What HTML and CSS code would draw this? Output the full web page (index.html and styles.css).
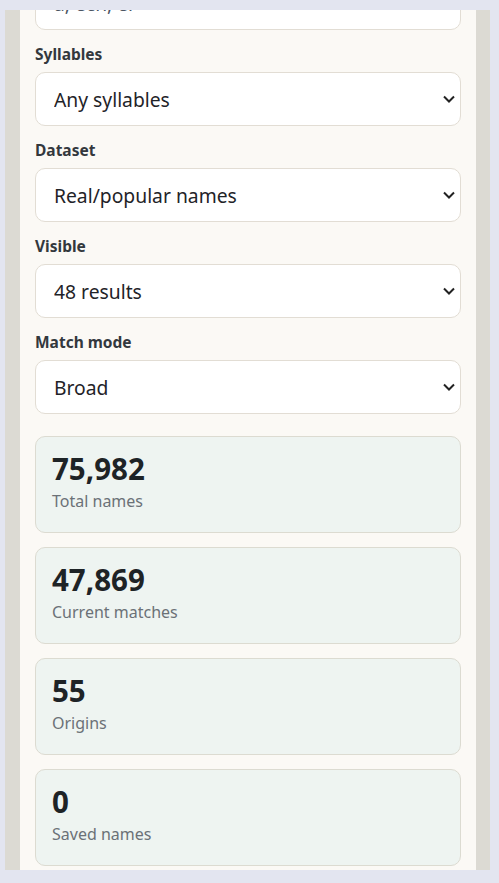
FILE: index.html
```html
<!DOCTYPE html>
<html lang="en">
<head>
    <meta charset="UTF-8">
    <meta name="viewport" content="width=device-width, initial-scale=1.0">
    <title>Name Finder - Filters</title>
    <link rel="stylesheet" href="styles.css">
</head>
<body>
    <div class="frame">
        <div class="panel">
            <div class="form-group first">
                <input type="text" class="field" value="a, ech, er">
            </div>
            <div class="form-group">
                <label for="syllables">Syllables</label>
                <select id="syllables" class="field">
                    <option>Any syllables</option>
                    <option>1 syllable</option>
                    <option>2 syllables</option>
                    <option>3+ syllables</option>
                </select>
            </div>
            <div class="form-group">
                <label for="dataset">Dataset</label>
                <select id="dataset" class="field">
                    <option>Real/popular names</option>
                    <option>Generated names</option>
                </select>
            </div>
            <div class="form-group">
                <label for="visible">Visible</label>
                <select id="visible" class="field">
                    <option>48 results</option>
                    <option>96 results</option>
                </select>
            </div>
            <div class="form-group">
                <label for="matchMode">Match mode</label>
                <select id="matchMode" class="field">
                    <option>Broad</option>
                    <option>Strict</option>
                </select>
            </div>

            <div class="stats">
                <div class="stat-card">
                    <div class="stat-value">75,982</div>
                    <div class="stat-label">Total names</div>
                </div>
                <div class="stat-card">
                    <div class="stat-value">47,869</div>
                    <div class="stat-label">Current matches</div>
                </div>
                <div class="stat-card">
                    <div class="stat-value">55</div>
                    <div class="stat-label">Origins</div>
                </div>
                <div class="stat-card">
                    <div class="stat-value">0</div>
                    <div class="stat-label">Saved names</div>
                </div>
            </div>
        </div>
    </div>
</body>
</html>
```

FILE: styles.css
```css
body {
    font-family: "Noto Sans", "Open Sans", sans-serif;
    background-color: #e3e5f0;
    margin: 0;
    padding: 10px 0 0 5px;
}
.frame {
    box-sizing: border-box;
    width: 485px;
    height: 860px;
    background: #fbf9f5;
    border-left: 15px solid #dcdad3;
    border-right: 14px solid #dcdad3;
    overflow: hidden;
}
.panel {
    padding: 0 15px;
}
.form-group {
    margin-bottom: 15px;
}
.form-group.first {
    margin-top: -34px;
}
label {
    display: block;
    font-size: 15.5px;
    font-weight: 700;
    line-height: 18px;
    color: #33383d;
    margin-bottom: 9px;
}
.field {
    display: block;
    box-sizing: border-box;
    width: 100%;
    height: 54px;
    padding: 0 30px 0 18px;
    border: 1px solid #e2ddd4;
    border-radius: 10px;
    background-color: #fff;
    font-family: inherit;
    font-size: 19.3px;
    color: #1f2328;
    outline: none;
}
input.field {
    color: #4b5563;
}
select.field {
    -webkit-appearance: none;
    appearance: none;
    background-image: url("data:image/svg+xml,%3Csvg xmlns='http://www.w3.org/2000/svg' width='12' height='8' viewBox='0 0 12 8'%3E%3Cpath d='M1 1.5l5 5 5-5' fill='none' stroke='%23222' stroke-width='2'/%3E%3C/svg%3E");
    background-repeat: no-repeat;
    background-position: right 5px center;
    background-size: 12px 8px;
}
.stats {
    display: flex;
    flex-direction: column;
    gap: 14px;
    margin-top: 22px;
}
.stat-card {
    box-sizing: border-box;
    height: 97px;
    padding: 15px 16px;
    background: #eef4f1;
    border: 1px solid #dcdbd1;
    border-radius: 10px;
}
.stat-value {
    font-size: 29.5px;
    font-weight: 700;
    line-height: 34px;
    color: #1e2326;
}
.stat-label {
    font-size: 16px;
    line-height: 24px;
    color: #6b7177;
    margin-top: 3px;
}
```
